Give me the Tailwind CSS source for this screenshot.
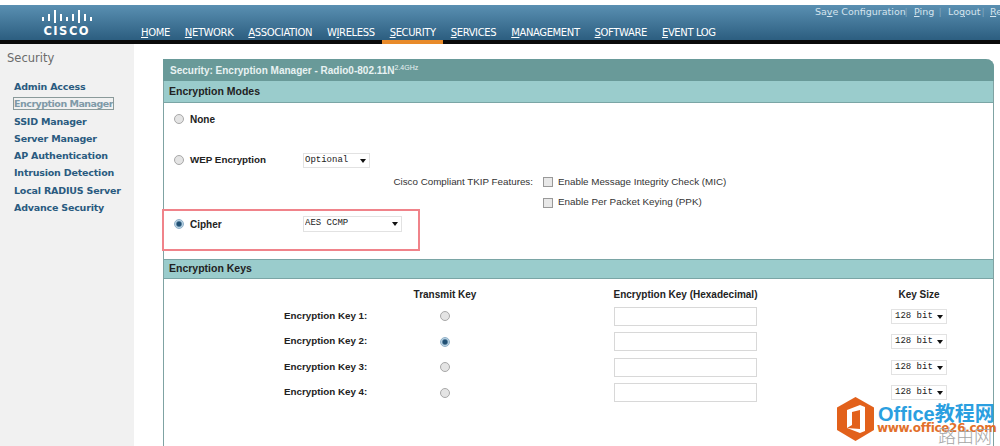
<!DOCTYPE html>
<html lang="en">
<head>
  <meta charset="UTF-8" />
  <title>Security: Encryption Manager</title>
  <script src="https://cdn.jsdelivr.net/npm/@tailwindcss/browser@4"></script>
</head>
<body class="bg-white h-[446px] overflow-hidden relative font-['Liberation_Sans',sans-serif] text-[#222]">

  <!-- Header -->
  <header class="mt-[5px] h-[39px] flex relative bg-gradient-to-b from-[#5a90b2] to-[#2c5e80] border-b-[4px] border-[#0a0a0a]">
    <div class="w-[133.5px] shrink-0 flex flex-col items-center">
      <svg class="mt-[5px]" width="52" height="14" viewBox="0 0 52 14" fill="#fff">
        <rect x="1" y="7" width="2" height="4"/><rect x="7" y="4" width="2" height="7"/><rect x="13" y="0" width="2" height="13"/><rect x="19" y="4" width="2" height="7"/><rect x="25" y="7" width="2" height="4"/><rect x="31" y="4" width="2" height="7"/><rect x="37" y="0" width="2" height="13"/><rect x="43" y="4" width="2" height="7"/><rect x="49" y="7" width="2" height="4"/>
      </svg>
      <span class="text-white font-bold text-[11.5px] leading-[14px] tracking-[1.5px] font-['DejaVu_Sans',sans-serif]">CISCO</span>
    </div>
    <nav class="flex items-end text-[10px] text-white font-['DejaVu_Sans',sans-serif] tracking-[-0.38px]">
      <a class="px-[7.5px] h-[15px]"><u>H</u>OME</a>
      <a class="px-[7.5px] h-[15px]"><u>N</u>ETWORK</a>
      <a class="px-[7.5px] h-[15px]"><u>A</u>SSOCIATION</a>
      <a class="px-[7.5px] h-[15px]">W<u>I</u>RELESS</a>
      <a class="px-[7.5px] h-[15px] relative"><u>S</u>ECURITY<span class="absolute left-0 right-0 bottom-[-4px] h-[4px] bg-[#e88a2a]"></span></a>
      <a class="px-[7.5px] h-[15px]"><u>S</u>ERVICES</a>
      <a class="px-[7.5px] h-[15px]"><u>M</u>ANAGEMENT</a>
      <a class="px-[7.5px] h-[15px]"><u>S</u>OFTWARE</a>
      <a class="px-[7.5px] h-[15px]"><u>E</u>VENT LOG</a>
    </nav>
    <div class="absolute left-[815px] top-0 flex text-[9.5px] leading-[13px] text-[#d5e4ee] whitespace-nowrap font-['DejaVu_Sans',sans-serif]">
      <a class="w-[83px]">Sa<u>v</u>e Configuration</a>
      <span class="w-[16px] text-center text-[#7fa5bd]">|</span>
      <a class="w-[18px]"><u>P</u>ing</a>
      <span class="w-[16px] text-center text-[#7fa5bd]">|</span>
      <a class="w-[28px]">Lo<u>g</u>out</a>
      <span class="w-[14px] text-center text-[#7fa5bd]">|</span>
      <a><u>R</u>efresh</a>
    </div>
  </header>

  <div class="flex h-[402px]">
    <!-- Sidebar -->
    <aside class="w-[134px] shrink-0 bg-[#f1f1f1] pt-[7px] pl-[7px]">
      <h2 class="text-[11.5px] leading-[15px] text-[#6b6b6b] font-['DejaVu_Sans',sans-serif]">Security</h2>
      <ul class="mt-[12px] pl-[7px] text-[9.5px] leading-[17.3px] font-bold text-[#2a5b80] font-['DejaVu_Sans',sans-serif] tracking-[-0.2px] whitespace-nowrap">
        <li>Admin Access</li>
        <li><span class="text-[#7f9aa8] tracking-[-0.5px] outline outline-1 outline-[#8a9a9a]">Encryption Manager</span></li>
        <li>SSID Manager</li>
        <li>Server Manager</li>
        <li>AP Authentication</li>
        <li>Intrusion Detection</li>
        <li>Local RADIUS Server</li>
        <li>Advance Security</li>
      </ul>
    </aside>

    <!-- Main panel -->
    <main class="ml-[29px] mt-[15px] w-[831px] border-x border-[#7fa3a3] rounded-tr-[8px] text-[10px]">
      <div class="h-[22px] bg-[#699a99] rounded-tr-[8px] pl-[7px] flex items-center font-bold text-[#e8f2f2] mr-[-1px] ml-[-1px]">
        <span>Security: Encryption Manager - Radio0-802.11N<sup class="text-[7px] font-normal">2.4GHz</sup></span>
      </div>
      <div class="h-[22px] bg-[#9acccc] border-b border-[#7aa5a5] pl-[5px] pt-[1px] flex items-center font-bold text-[10.5px]">Encryption Modes</div>

      <!-- Encryption modes -->
      <div class="h-[32px] flex items-center pl-[10px] font-bold">
        <input type="radio" name="mode" class="appearance-none w-[10px] h-[10px] rounded-full border border-[#a8a8a8] bg-[#e4e4e4]" />
        <span class="ml-[6px]">None</span>
      </div>
      <div class="h-[22px] mt-[14px] flex items-center pl-[10px] font-bold">
        <input type="radio" name="mode" class="appearance-none w-[10px] h-[10px] rounded-full border border-[#a8a8a8] bg-[#e4e4e4]" />
        <span class="ml-[6px] w-[113px] text-[9.8px]">WEP Encryption</span>
        <div class="relative w-[67px] h-[15px]">
          <select class="block appearance-none w-full h-full border border-[#e2e2e2] pl-[1px] text-[9px] font-normal font-['Liberation_Mono',monospace] text-[#222]"><option>Optional</option></select>
          <span class="absolute right-[4px] top-[6px] border-x-[3px] border-x-transparent border-t-[4px] border-t-[#111]"></span>
        </div>
      </div>
      <div class="h-[21px] pt-[1px] flex items-center">
        <span class="w-[369px] text-right text-[9.8px] text-[#333]">Cisco Compliant TKIP Features:</span>
        <input type="checkbox" class="appearance-none ml-[10px] w-[10px] h-[10px] border border-[#999] bg-[#e8e8e8]" />
        <span class="ml-[5px] text-[9.8px] text-[#333]">Enable Message Integrity Check (MIC)</span>
      </div>
      <div class="h-[20px] pt-[1px] flex items-center pl-[379px]">
        <input type="checkbox" class="appearance-none w-[10px] h-[10px] border border-[#999] bg-[#e8e8e8]" />
        <span class="ml-[5px] text-[9.9px] text-[#333]">Enable Per Packet Keying (PPK)</span>
      </div>
      <div class="h-[24px] flex items-center pl-[10px] font-bold">
        <input type="radio" name="mode" checked class="appearance-none w-[10px] h-[10px] rounded-full border border-[#8fb0c8] bg-[radial-gradient(circle,#1f4f73_0_35%,#b5d0e2_60%,#dbe8f0_100%)]" />
        <span class="ml-[6px] w-[113px]">Cipher</span>
        <div class="relative w-[99px] h-[16px]">
          <select class="block appearance-none w-full h-full border border-[#e2e2e2] pl-[1px] text-[9px] font-normal font-['Liberation_Mono',monospace] text-[#222]"><option>AES CCMP</option></select>
          <span class="absolute right-[4px] top-[6px] border-x-[3px] border-x-transparent border-t-[4px] border-t-[#111]"></span>
        </div>
      </div>

      <!-- Encryption keys -->
      <div class="h-[20px] mt-[23px] bg-[#9acccc] border-y border-[#7aa5a5] pl-[5px] flex items-center font-bold text-[10.5px]">Encryption Keys</div>
      <div class="grid grid-cols-[130px_62px_138px_143px_134px_56px] ml-[120px] items-center font-bold">
        <span class="col-start-2 h-[24.5px] pt-[6px] flex items-center justify-center whitespace-nowrap">Transmit Key</span>
        <span class="col-start-4 h-[24.5px] pt-[6px] flex items-center justify-center whitespace-nowrap">Encryption Key (Hexadecimal)</span>
        <span class="col-start-6 h-[24.5px] pt-[6px] flex items-center justify-center whitespace-nowrap">Key Size</span>

        <span class="h-[25.5px] flex items-center text-[9.8px]">Encryption Key 1:</span>
        <span class="flex justify-center"><input type="radio" name="key" class="appearance-none w-[10px] h-[10px] rounded-full border border-[#a8a8a8] bg-[#e4e4e4]" /></span>
        <span></span>
        <input class="h-[19px] border border-[#d8d8d8]" />
        <span></span>
        <div class="relative h-[15px]">
          <select class="block appearance-none w-full h-full border border-[#e2e2e2] pl-[3px] text-[9px] font-normal font-['Liberation_Mono',monospace] text-[#222]"><option>128 bit</option></select>
          <span class="absolute right-[4px] top-[6px] border-x-[3px] border-x-transparent border-t-[4px] border-t-[#111]"></span>
        </div>

        <span class="h-[25.5px] flex items-center text-[9.8px]">Encryption Key 2:</span>
        <span class="flex justify-center"><input type="radio" name="key" checked class="appearance-none w-[10px] h-[10px] rounded-full border border-[#8fb0c8] bg-[radial-gradient(circle,#1f4f73_0_35%,#b5d0e2_60%,#dbe8f0_100%)]" /></span>
        <span></span>
        <input class="h-[19px] border border-[#d8d8d8]" />
        <span></span>
        <div class="relative h-[15px]">
          <select class="block appearance-none w-full h-full border border-[#e2e2e2] pl-[3px] text-[9px] font-normal font-['Liberation_Mono',monospace] text-[#222]"><option>128 bit</option></select>
          <span class="absolute right-[4px] top-[6px] border-x-[3px] border-x-transparent border-t-[4px] border-t-[#111]"></span>
        </div>

        <span class="h-[25.5px] flex items-center text-[9.8px]">Encryption Key 3:</span>
        <span class="flex justify-center"><input type="radio" name="key" class="appearance-none w-[10px] h-[10px] rounded-full border border-[#a8a8a8] bg-[#e4e4e4]" /></span>
        <span></span>
        <input class="h-[19px] border border-[#d8d8d8]" />
        <span></span>
        <div class="relative h-[15px]">
          <select class="block appearance-none w-full h-full border border-[#e2e2e2] pl-[3px] text-[9px] font-normal font-['Liberation_Mono',monospace] text-[#222]"><option>128 bit</option></select>
          <span class="absolute right-[4px] top-[6px] border-x-[3px] border-x-transparent border-t-[4px] border-t-[#111]"></span>
        </div>

        <span class="h-[25.5px] flex items-center text-[9.8px]">Encryption Key 4:</span>
        <span class="flex justify-center"><input type="radio" name="key" class="appearance-none w-[10px] h-[10px] rounded-full border border-[#a8a8a8] bg-[#e4e4e4]" /></span>
        <span></span>
        <input class="h-[19px] border border-[#d8d8d8]" />
        <span></span>
        <div class="relative h-[15px]">
          <select class="block appearance-none w-full h-full border border-[#e2e2e2] pl-[3px] text-[9px] font-normal font-['Liberation_Mono',monospace] text-[#222]"><option>128 bit</option></select>
          <span class="absolute right-[4px] top-[6px] border-x-[3px] border-x-transparent border-t-[4px] border-t-[#111]"></span>
        </div>
      </div>
    </main>
  </div>

  <!-- Red annotation box over the Cipher row -->
  <div class="absolute left-[162px] top-[209px] w-[258px] h-[42px] border-t-2 border-r-2 border-b-2 border-l-2 border-t-[#f0838a] border-r-[#f0838a] border-b-[#f0838a] border-l-[#f0838a]"></div>

  <!-- Watermark -->
  <div class="absolute left-[837px] top-[397px] w-[163px] h-[49px]">
    <svg class="absolute left-0 top-0" width="37" height="44" viewBox="0 0 37 44">
      <polygon points="18.5,0 37,10.5 37,33 18.5,44 0,33 0,10.5" fill="#e2611b"/>
      <polygon points="10,13 23,8 28,10 28,34 23,36 10,31 23,32 23,13 15,15 15,28 10,31" fill="#fff"/>
    </svg>
    <span class="absolute left-[41px] top-[6px] text-[20px] leading-[22px] font-bold text-[#2b9fe0] whitespace-nowrap font-['Liberation_Sans','Noto_Sans_CJK_SC',sans-serif]">Office教程网</span>
    <span class="absolute left-[40px] top-[24px] text-[12px] leading-[14px] font-bold text-[#e2702b] whitespace-nowrap font-['DejaVu_Sans',sans-serif] tracking-[-0.3px]">www.office26.com</span>
    <span class="absolute left-[101px] top-[28px] text-[18px] leading-[20px] font-light text-[#a5a5a5] whitespace-nowrap font-['Noto_Sans_CJK_SC',sans-serif]">路由网</span>
  </div>
</body>
</html>
